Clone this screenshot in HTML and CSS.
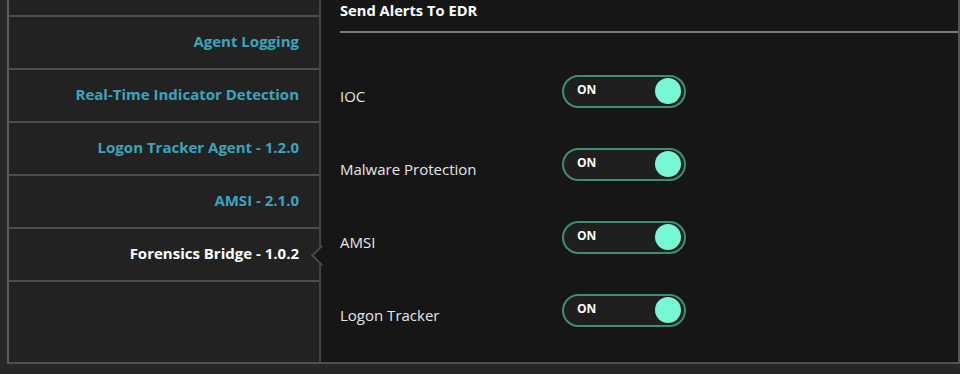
FILE: index.html
```html
<!DOCTYPE html>
<html>
<head>
<meta charset="utf-8">
<link rel="stylesheet" href="styles.css">
</head>
<body>
<div class="frame">
  <nav class="sidebar">
    <div class="nav-item nav-top"></div>
    <div class="nav-item">Agent Logging</div>
    <div class="nav-item">Real-Time Indicator Detection</div>
    <div class="nav-item">Logon Tracker Agent - 1.2.0</div>
    <div class="nav-item">AMSI - 2.1.0</div>
    <div class="nav-item active">Forensics Bridge - 1.0.2</div>
    <div class="nav-fill"></div>
  </nav>
  <main class="content">
    <h2 class="heading">Send Alerts To EDR</h2>
    <div class="rows">
      <div class="row"><span class="label">IOC</span><div class="toggle"><span class="toggle-text">ON</span><span class="knob"></span></div></div>
      <div class="row"><span class="label">Malware Protection</span><div class="toggle"><span class="toggle-text">ON</span><span class="knob"></span></div></div>
      <div class="row"><span class="label">AMSI</span><div class="toggle"><span class="toggle-text">ON</span><span class="knob"></span></div></div>
      <div class="row"><span class="label">Logon Tracker</span><div class="toggle"><span class="toggle-text">ON</span><span class="knob"></span></div></div>
    </div>
  </main>
</div>
</body>
</html>
```
FILE: styles.css
```css
html, body {
  margin: 0;
  padding: 0;
  background: #272727;
  font-family: "Open Sans", "Noto Sans", sans-serif;
  overflow: hidden;
}
.frame {
  display: flex;
  height: 362px;
  margin-left: 7px;
  border-left: 2px solid #5c5c5c;
  border-bottom: 2px solid #505050;
  border-right: 2px solid #555;
  width: 949px;
}
.sidebar {
  width: 310px;
  flex: none;
  background: #222222;
  border-right: 2px solid #444;
  display: flex;
  flex-direction: column;
}
.nav-item {
  height: 51px;
  box-sizing: content-box;
  border-bottom: 2px solid #4e4e4e;
  display: flex;
  align-items: center;
  justify-content: flex-end;
  padding-right: 20px;
  color: #3aa5be;
  font-weight: 700;
  font-size: 15px;
  position: relative;
  padding-bottom: 0;
}
.nav-item span, .nav-item {
  line-height: 19px;
}
.nav-item:not(.nav-top) {
  height: 49px;
  padding-bottom: 2px;
}
.nav-top {
  height: 15px;
}
.nav-item.active {
  color: #ffffff;
}
.nav-item.active::after {
  content: "";
  position: absolute;
  right: -10px;
  top: 50%;
  width: 15px;
  height: 15px;
  margin-top: -7px;
  background: #161616;
  border-left: 2px solid #4a4a4a;
  border-bottom: 2px solid #4a4a4a;
  transform: rotate(45deg);
  box-sizing: border-box;
}
.nav-fill {
  flex: 1;
}
.content {
  flex: 1;
  background: #161616;
  padding-left: 19px;
  display: flex;
  flex-direction: column;
}
.heading {
  margin: 0;
  font-size: 14.7px;
  font-weight: 700;
  color: #ffffff;
  line-height: 20px;
  height: 31px;
  border-bottom: 2px solid #7a7a7a;
}
.rows {
  margin-top: 22px;
  display: flex;
  flex-direction: column;
}
.row {
  height: 73px;
  display: flex;
  align-items: center;
}
.label {
  width: 222px;
  color: #e6e6e6;
  font-size: 15px;
  padding-top: 8px;
}
.toggle {
  width: 124px;
  height: 33px;
  box-sizing: border-box;
  border: 2px solid #3f8e74;
  border-radius: 17px;
  background: #1f1f1f;
  display: flex;
  align-items: center;
  justify-content: space-between;
  padding: 0 3px 0 13px;
  margin-top: -1px;
}
.toggle-text {
  color: #ffffff;
  font-weight: 700;
  font-size: 12px;
  margin-top: -3px;
}
.knob {
  width: 26px;
  height: 26px;
  border-radius: 50%;
  background: #77f8d5;
}
```
